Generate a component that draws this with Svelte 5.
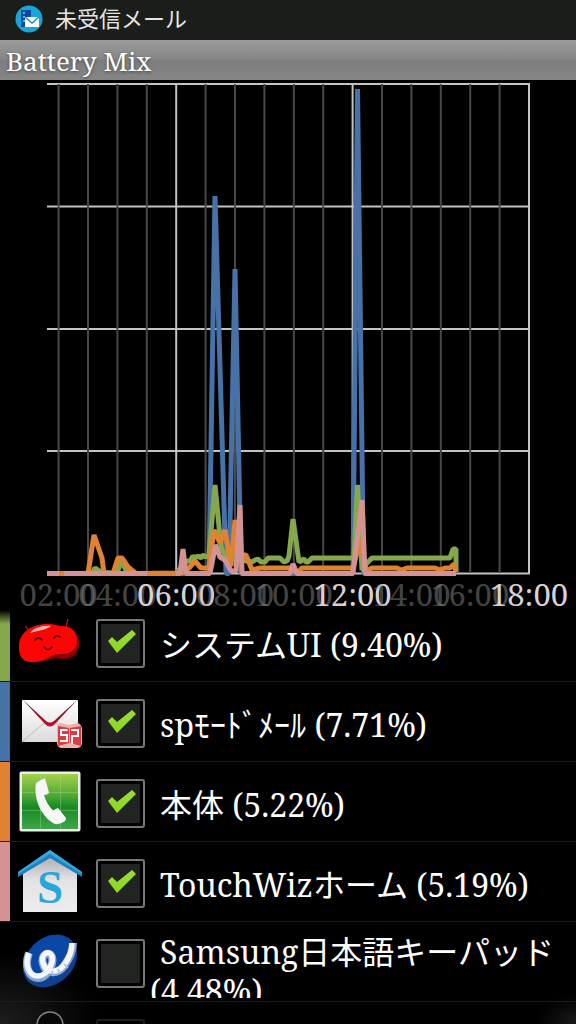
<script>
  const step = 29.4;
  const gridX = Array.from({ length: 17 }, (_, i) => ({
    x: 58.6 + i * step,
    major: i % 6 === 4
  }));
  const gridY = [84, 206.5, 329, 451, 573.5];
  const hours = ['02', '04', '06', '08', '10', '12', '14', '16', '18'].map((h, i) => ({
    text: h + ':00',
    x: 58.6 + i * step * 2,
    major: Number(h) % 6 === 0
  }));

  const series = [
    {
      color: '#4672a8',
      points: '47,573.5 209,573.5 215,196 226,573.5 229,573.5 235,269 241,573.5 353,573.5 357.5,89 363.5,573.5 456,573.5'
    },
    {
      color: '#86a84c',
      points:
        '47,573.5 92,573.5 95,568 101,572 117,573.5 121,561 128,573.5 176,573.5 183,566 187,561 190,561 193,556 195,558 198,556 201,558 203,555 206,557 209,555 215,485 221,547 228,562 237,545 241,560 252,562 255,560 258,559 261,562 265,562 268,558 280,558 284,562 287,561 289,556 293,519 299,562 304,559 306,562 308,562 312,558 354,558 357.5,485 362,570 367,563 372,558 450,558 453,549 456,549 456,572'
    },
    {
      color: '#df8333',
      points:
        '47,573.5 88,573.5 94,535 102,558 104,573.5 113,573.5 118,558 122,558 128,567 136,573.5 182,573 189,568 195,561 201,568 209,568 214,530 220,543 225,530 231,566 235,520 240,560 243,555 246,555 252,570 260,568 290,568 297,573 302,568 353,568 360,540 366,571 372,568 397,568 401,570 407,568 435,568 440,570 445,568 450,568 454,564 456,572'
    },
    {
      color: '#d49292',
      points:
        '47,573.5 59,573.5 M64,573.5 147,573.5 M176,573.5 180,573.5 183,549 186,573.5 210,573.5 215.5,545 220,557 225,560 231,571 236,571 240,505 242,573.5 290,573.5 293,564 297,573.5 353,573.5 362,500 365,573.5 456,573.5'
    }
  ];

  let apps = $state([
    { id: 'bean', name: 'システムUI (9.40%)', color: '#86a84c', on: true, fade: true },
    { id: 'mail', name: 'spﾓｰﾄﾞﾒｰﾙ (7.71%)', color: '#4672a8', on: true },
    { id: 'phone', name: '本体 (5.22%)', color: '#df8333', on: true },
    { id: 'home', name: 'TouchWizホーム (5.19%)', color: '#d49292', on: true },
    { id: 'keypad', name: 'Samsung日本語キーパッド (4.48%)', color: 'transparent', on: false, wrap: true },
    { id: 'more', name: '', color: 'transparent', on: false, dim: true }
  ]);
</script>

<div class="screen">
  <header class="status">
    <svg class="status-icon" viewBox="0 0 28 28" aria-hidden="true">
      <circle cx="14" cy="14" r="13.5" fill="#1aa5d8" />
      <path d="M6 5h10v17H6z" fill="#0a4a9c" />
      <path d="M8 7h2v2H8zM8 11h2v2H8zM8 15h2v2H8z" fill="#4bb7e6" />
      <rect x="10" y="12" width="14" height="10" fill="#fff" />
      <path d="M10 12l7 6 7-6" fill="none" stroke="#1a8dca" stroke-width="1.5" />
    </svg>
    <span>未受信メール</span>
  </header>
  <h1>Battery Mix</h1>

  <svg class="chart" viewBox="0 80 576 522" role="img" aria-label="Battery Mix">
    {#each gridY as y}
      <line x1="47" x2="530" y1={y} y2={y} stroke="#c4c4c4" stroke-width="2" />
    {/each}
    {#each gridX as g}
      <line x1={g.x} x2={g.x} y1="84" y2="573" stroke={g.major ? '#c4c4c4' : '#484848'} stroke-width="2" />
    {/each}
    {#each series as s}
      <path
        d={'M' + s.points}
        fill="none"
        stroke={s.color}
        stroke-width="5"
        stroke-linejoin="bevel"
      />
    {/each}
    {#each hours as h}
      <text x={h.x} y="606" class:major={h.major}>{h.text}</text>
    {/each}
  </svg>

  <ul>
    {#each apps as app}
      <li class:wrap={app.wrap} class:dim={app.dim}>
        <span class="bar" class:fade={app.fade} style:--tone={app.color}></span>
        <svg class="icon" viewBox="0 0 64 64" aria-hidden="true">
          {#if app.id === 'bean'}
            <path d="M7.500 16l3.500 5M50 9l-2 8" stroke="#b01818" stroke-width="1.300" />
            <path d="M1 37C1 24 12 14 30 14c6 0 9 2 15 2 9 0 15 6 16 16 1 11-7 18-17 17-5-1-8-1-15 1-9 3-17 3-22 0-5-3-6-8-6-13z" fill="#8e0000" />
            <path d="M1 36C1 24 12 14 30 14c6 0 9 2 14 2 8 0 14 5 15 14 0 9-6 14-15 14-8 0-11 2-17 5-8 4-16 4-21 1-4-3-5-8-5-14z" fill="#fb0505" />
            <path d="M12 23c4-5 11-8 21-7-4 4-12 4-21 7z" fill="#ffb0a8" />
            <path d="M17 30q3-4 7 0M36 28q3-4 6-1M26 37q4 5 8 0" fill="none" stroke="#5a0000" stroke-width="1.600" stroke-linecap="round" />
          {:else if app.id === 'mail'}
            <defs>
              <linearGradient id="paper" x1="0" y1="0" x2="0" y2="1">
                <stop offset="0" stop-color="#fff" />
                <stop offset="1" stop-color="#dcdcdc" />
              </linearGradient>
              <linearGradient id="flap" x1="0" y1="0" x2="0" y2="1">
                <stop offset="0" stop-color="#4a1a1e" />
                <stop offset="1" stop-color="#d0092c" />
              </linearGradient>
            </defs>
            <rect x="4" y="10" width="56" height="42" rx="1" fill="url(#paper)" />
            <path d="M5 51l21-18M59 51L38 33" stroke="#bbb" />
            <path d="M5 10L27 34q5 5 10 0L59 10 36 31q-4 3-8 0z" fill="url(#flap)" />
            <path d="M42 33l9 2 9-2q4 2 4 6v14q0 4-4 5H43q-4-1-4-5V39q0-4 3-6z" fill="#f2b0ac" />
            <path d="M40 36l11 2v15l-11 3zM52 38l11-2v20l-11-3z" fill="#dc3a44" />
            <path d="M49.500 40H43v5h6v6h-7M54 54V46M53 40h7v6h-6v3" fill="none" stroke="#fff" stroke-width="2" />
          {:else if app.id === 'phone'}
            <defs>
              <linearGradient id="leaf" x1="0" y1="0" x2="0" y2="1">
                <stop offset="0" stop-color="#a4cf4a" />
                <stop offset="0.350" stop-color="#58ae38" />
                <stop offset="0.600" stop-color="#168a26" />
                <stop offset="1" stop-color="#3fa548" />
              </linearGradient>
            </defs>
            <rect x="1.500" y="1.500" width="61" height="60" rx="2" fill="#e9eee6" />
            <rect x="4" y="4" width="56" height="55" fill="url(#leaf)" />
            <path d="M22.500 4v55M42.500 4v55M4 22.500h56M4 40.500h56" stroke="#a8e08c" stroke-opacity="0.350" />
            <path d="M18 13q4-3 9-5l4 14.500q-1 2-5 2.500 2 8 9 15.500 3-2 5-2.500l8 10q0 2-1 3-5 4-10 3C26 49 15 32 18 13z" fill="#f6f6f6" />
          {:else if app.id === 'home'}
            <defs>
              <linearGradient id="wall" x1="0" y1="0" x2="0" y2="1">
                <stop offset="0" stop-color="#a9a9ae" />
                <stop offset="0.450" stop-color="#e4e4e7" />
                <stop offset="1" stop-color="#ededef" />
              </linearGradient>
            </defs>
            <path d="M5 22L32 5l27 17v40H5z" fill="url(#wall)" />
            <path d="M0 22L32 0l32 22v5L32 8 0 27z" fill="#1b83bd" />
            <path d="M0 22L32 0l32 22v2L32 4 0 24z" fill="#36a9dd" />
            <text class="home-letter" x="32" y="53">S</text>
          {:else if app.id === 'keypad'}
            <ellipse cx="32" cy="31" rx="30" ry="23" transform="rotate(-43 32 31)" fill="#10418f" />
            <ellipse cx="31" cy="28" rx="26" ry="20" transform="rotate(-43 31 28)" fill="#0b47a4" />
            <path d="M11 23C6 36 11 48 20 48c9 0 16-14 14-21-3-7-12-2-9 7 3 11 15 10 21 2 6-8 9-15 9-23" fill="none" stroke="#8fa6cc" stroke-width="8" />
            <path d="M11 23C6 35 11 46 20 46c9 0 16-13 14-20-3-7-12-2-9 7 3 11 15 10 21 2 6-8 8-15 8-22" fill="none" stroke="#f4f6fb" stroke-width="5.500" />
            <path d="M34 41l1 5M40 39l2 5M46 34l4 4" stroke="#a9b8d2" stroke-width="1.500" />
          {:else}
            <circle cx="32" cy="15" r="13" fill="#080808" stroke="#858585" stroke-width="1.500" />
          {/if}
        </svg>
        <input type="checkbox" id={app.id} bind:checked={app.on} aria-label={app.name || 'app'} />
        <label for={app.id}>{app.name}</label>
      </li>
    {/each}
  </ul>
</div>

<style>
  :global(body) {
    margin: 0;
    background: #000;
  }
  .screen {
    height: 100vh;
    overflow: hidden;
    display: flex;
    flex-direction: column;
    color: #fff;
    background:
      radial-gradient(ellipse 100px 70px at 0 100%, #1e1e1e, transparent),
      radial-gradient(ellipse 40px 30px at 100% 100%, #1a1a1a, transparent),
      #000;
    font-family: 'Droid Serif', 'Noto Serif', 'DejaVu Serif Condensed', 'Noto Sans CJK JP', serif;
  }
  .status {
    flex: none;
    height: 40px;
    box-sizing: border-box;
    padding: 0 15px 2px;
    display: flex;
    align-items: center;
    gap: 12px;
    background: #1b1d1b;
    color: #e4e4e4;
    font-size: 22px;
    line-height: 28px;
  }
  .status span {
    padding-bottom: 2px;
  }
  .status-icon {
    width: 28px;
    height: 28px;
  }
  h1 {
    flex: none;
    margin: 0;
    height: 40px;
    padding: 0 6px;
    background: linear-gradient(#9b9b9b, #858585 50%, #7d7d7d 50%, #858585);
    font-size: 26px;
    font-weight: 400;
    line-height: 42px;
    text-shadow: 0 1px 3px #444;
  }
  .chart {
    flex: none;
    display: block;
    width: 100%;
    overflow: visible;
  }
  .chart text {
    font-size: 31px;
    text-anchor: middle;
    fill: #888;
    fill-opacity: 0.5;
  }
  .chart text.major {
    fill: #d6d2d6;
    fill-opacity: 1;
  }
  ul {
    margin: 0;
    padding: 0;
    list-style: none;
  }
  li {
    display: grid;
    grid-template-columns: 10px 64px 48px 1fr;
    align-items: center;
    height: 80px;
    box-sizing: border-box;
    border-bottom: 1px solid #1c1c1c;
  }
  .bar {
    align-self: stretch;
    background: var(--tone);
  }
  .bar.fade {
    background: linear-gradient(transparent 8px, var(--tone) 22px);
  }
  .icon {
    width: 64px;
    height: 64px;
    margin-left: 8px;
  }
  .home-letter {
    font: bold 47px 'Liberation Serif', serif;
    text-anchor: middle;
    fill: #27a7d8;
  }
  input {
    appearance: none;
    margin: 4px 0 0 22px;
    width: 49px;
    height: 49px;
    box-sizing: border-box;
    border: 2px solid #777;
    border-radius: 3px;
    background: #222422;
    box-shadow: inset 0 0 0 3px #000;
  }
  input:checked::before {
    content: '';
    display: block;
    height: 45px;
    background: linear-gradient(#a4e23c, #7cd015);
    clip-path: polygon(10px 20px, 14px 16px, 19px 21px, 34px 9px, 38px 13px, 19px 32px);
  }
  label {
    margin-left: 28px;
    padding-top: 6px;
    text-indent: 10px;
    font-size: 32px;
    line-height: 39px;
  }
  .wrap label {
    align-self: start;
    height: 66px;
    padding-top: 10px;
    overflow: hidden;
  }
  .dim input {
    opacity: 0.25;
  }
</style>
